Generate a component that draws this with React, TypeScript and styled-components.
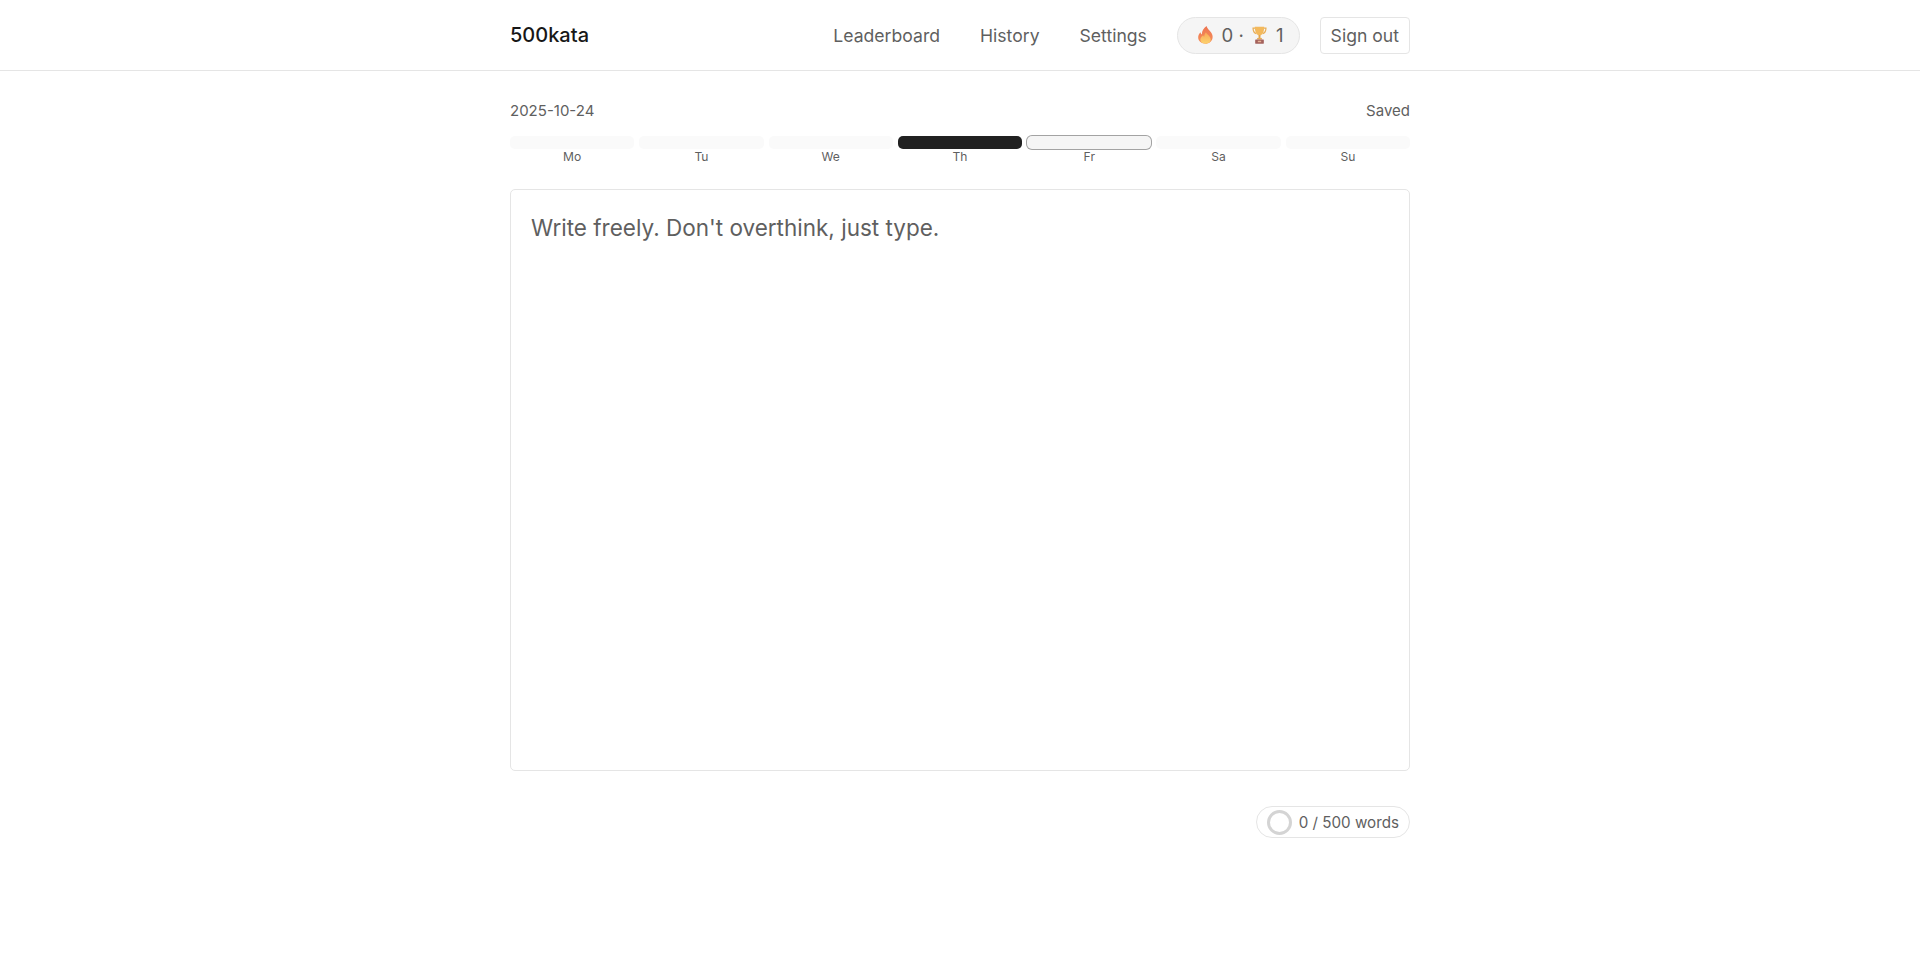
import styled, { createGlobalStyle } from "styled-components";

const GlobalStyle = createGlobalStyle`
  html, body {
    margin: 0;
    padding: 0;
    background: #fff;
    font-family: Inter, "Noto Sans", sans-serif;
    color: #5f5f5f;
  }
  * { box-sizing: border-box; }
`;

const Header = styled.header`
  height: 71px;
  border-bottom: 1px solid #e5e5e5;
`;

const HeaderInner = styled.div`
  width: 900px;
  height: 70px;
  margin: 0 auto;
  display: flex;
  align-items: center;
  justify-content: space-between;
`;

const Brand = styled.a`
  font-size: 20px;
  font-weight: 500;
  color: #171717;
`;

const Nav = styled.nav`
  display: flex;
  align-items: center;
`;

const NavLink = styled.a`
  font-size: 17.6px;
  color: #5f5f5f;
  margin-right: 40px;
`;

const StreakPill = styled.div`
  height: 37px;
  padding: 0 15px 0 20px;
  margin-left: -10px;
  display: flex;
  align-items: center;
  gap: 8.6px;
  font-size: 18.6px;
  background: #f5f5f5;
  border: 1px solid #e5e5e5;
  border-radius: 19px;
`;

const SignOut = styled.button`
  height: 37px;
  margin-left: 20px;
  padding: 0 10px;
  font: inherit;
  font-size: 17.6px;
  color: #5f5f5f;
  background: #fff;
  border: 1px solid #e5e5e5;
  border-radius: 4px;
`;

const Main = styled.main`
  width: 900px;
  margin: 0 auto;
  padding-top: 31px;
`;

const MetaRow = styled.div`
  display: flex;
  justify-content: space-between;
  font-size: 15px;
  line-height: 18px;
  color: #5f5f5f;
`;

const Week = styled.div`
  margin-top: 16px;
  display: grid;
  grid-template-columns: repeat(7, 1fr);
  gap: 5px;
`;

const Day = styled.div`
  display: flex;
  flex-direction: column;
  align-items: center;
`;

const Bar = styled.div<{ $state?: "done" | "today" }>`
  width: 100%;
  height: 13px;
  border-radius: 5px;
  background: ${(p) =>
    p.$state === "done" ? "#212121" : p.$state === "today" ? "#f5f5f5" : "#fafafa"};
  box-shadow: ${(p) => (p.$state === "today" ? "0 0 0 1px #a3a3a3" : "none")};
`;

const DayLabel = styled.span`
  font-size: 12.1px;
  line-height: 16px;
  color: #5f5f5f;
`;

const Editor = styled.textarea`
  display: block;
  width: 100%;
  height: 582px;
  margin-top: 24px;
  padding: 22px 20px;
  font: inherit;
  font-size: 22.5px;
  line-height: 1.4;
  color: #5f5f5f;
  background: #fff;
  border: 1px solid #e5e5e5;
  border-radius: 5px;
  resize: none;
  outline: none;
  &::placeholder {
    color: #5f5f5f;
    opacity: 1;
  }
`;

const Footer = styled.div`
  margin-top: 35px;
  display: flex;
  justify-content: flex-end;
`;

const WordPill = styled.div`
  height: 32px;
  padding: 0 10px;
  display: flex;
  align-items: center;
  gap: 7px;
  font-size: 15.2px;
  color: #5f5f5f;
  background: #fff;
  border: 1px solid #e5e5e5;
  border-radius: 17px;
`;

const Ring = styled.span`
  width: 25px;
  height: 25px;
  border: 3px solid #d4d4d4;
  border-radius: 50%;
`;

const FlameIcon = () => (
  <svg width="15" height="18" viewBox="1.5 0 15 20" preserveAspectRatio="none" aria-hidden="true">
    <defs>
      <linearGradient id="flame" x1="0" y1="0" x2="0" y2="1">
        <stop offset="0" stopColor="#ee7450" />
        <stop offset="1" stopColor="#f5905a" />
      </linearGradient>
      <linearGradient id="flameCore" x1="0" y1="0" x2="0" y2="1">
        <stop offset="0" stopColor="#f9a757" />
        <stop offset="1" stopColor="#fcd36e" />
      </linearGradient>
    </defs>
    <path
      d="M10 0c.6 3 3.200 4.600 4.800 7.400 1 1.800 1.700 3.800 1.200 6.100C15.300 17.200 12.300 19.600 9 19.600 5.200 19.600 2 17 1.700 13.300 1.500 10.800 2.600 8.700 3.900 7c.2 1.200.7 2 1.500 2.400C5.100 5.900 7.300 2.400 10 0z"
      fill="url(#flame)"
    />
    <path
      d="M9.500 7c.4 2 4.700 4.300 4.700 8 0 2.700-2.300 4.600-5.200 4.600S3.900 17.700 3.900 15c0-2.200 1.600-3.600 2.800-4.800.1.900.4 1.500 1 1.800C7.800 10.300 8.400 8.300 9.500 7z"
      fill="url(#flameCore)"
    />
  </svg>
);

const TrophyIcon = () => (
  <svg width="15" height="18" viewBox="0 0 17 19" preserveAspectRatio="none" aria-hidden="true">
    <path
      d="M3.500 2.200H1.200c0 3.400 1.100 5.300 3.600 5.800M13.500 2.200h2.300c0 3.400-1.100 5.300-3.600 5.800"
      fill="none"
      stroke="#e8ad55"
      strokeWidth="1.400"
    />
    <path d="M3.200 0.800h10.600c0 4.800-1.100 8-4 9H7.200c-2.900-1-4-4.200-4-9z" fill="#f3b95c" />
    <rect x="7.400" y="9.500" width="2.200" height="3.500" fill="#e0a24a" />
    <rect x="5.800" y="12.600" width="5.400" height="1.600" fill="#e8ad55" />
    <rect x="3.600" y="14.200" width="9.800" height="4.600" rx="0.500" fill="#a4625c" />
    <rect x="6.600" y="15.600" width="3.800" height="1.500" fill="#e6b396" />
  </svg>
);

const days = ["Mo", "Tu", "We", "Th", "Fr", "Sa", "Su"];

export default function App() {
  return (
    <>
      <GlobalStyle />
      <Header>
        <HeaderInner>
          <Brand>500kata</Brand>
          <Nav>
            <NavLink>Leaderboard</NavLink>
            <NavLink>History</NavLink>
            <NavLink>Settings</NavLink>
            <StreakPill>
              <FlameIcon />
              <span>0 ·</span>
              <TrophyIcon />
              <span>1</span>
            </StreakPill>
            <SignOut>Sign out</SignOut>
          </Nav>
        </HeaderInner>
      </Header>
      <Main>
        <MetaRow>
          <span>2025-10-24</span>
          <span>Saved</span>
        </MetaRow>
        <Week>
          {days.map((day) => (
            <Day key={day}>
              <Bar $state={day === "Th" ? "done" : day === "Fr" ? "today" : undefined} />
              <DayLabel>{day}</DayLabel>
            </Day>
          ))}
        </Week>
        <Editor placeholder="Write freely. Don't overthink, just type." />
        <Footer>
          <WordPill>
            <Ring />
            <span>0 / 500 words</span>
          </WordPill>
        </Footer>
      </Main>
    </>
  );
}
